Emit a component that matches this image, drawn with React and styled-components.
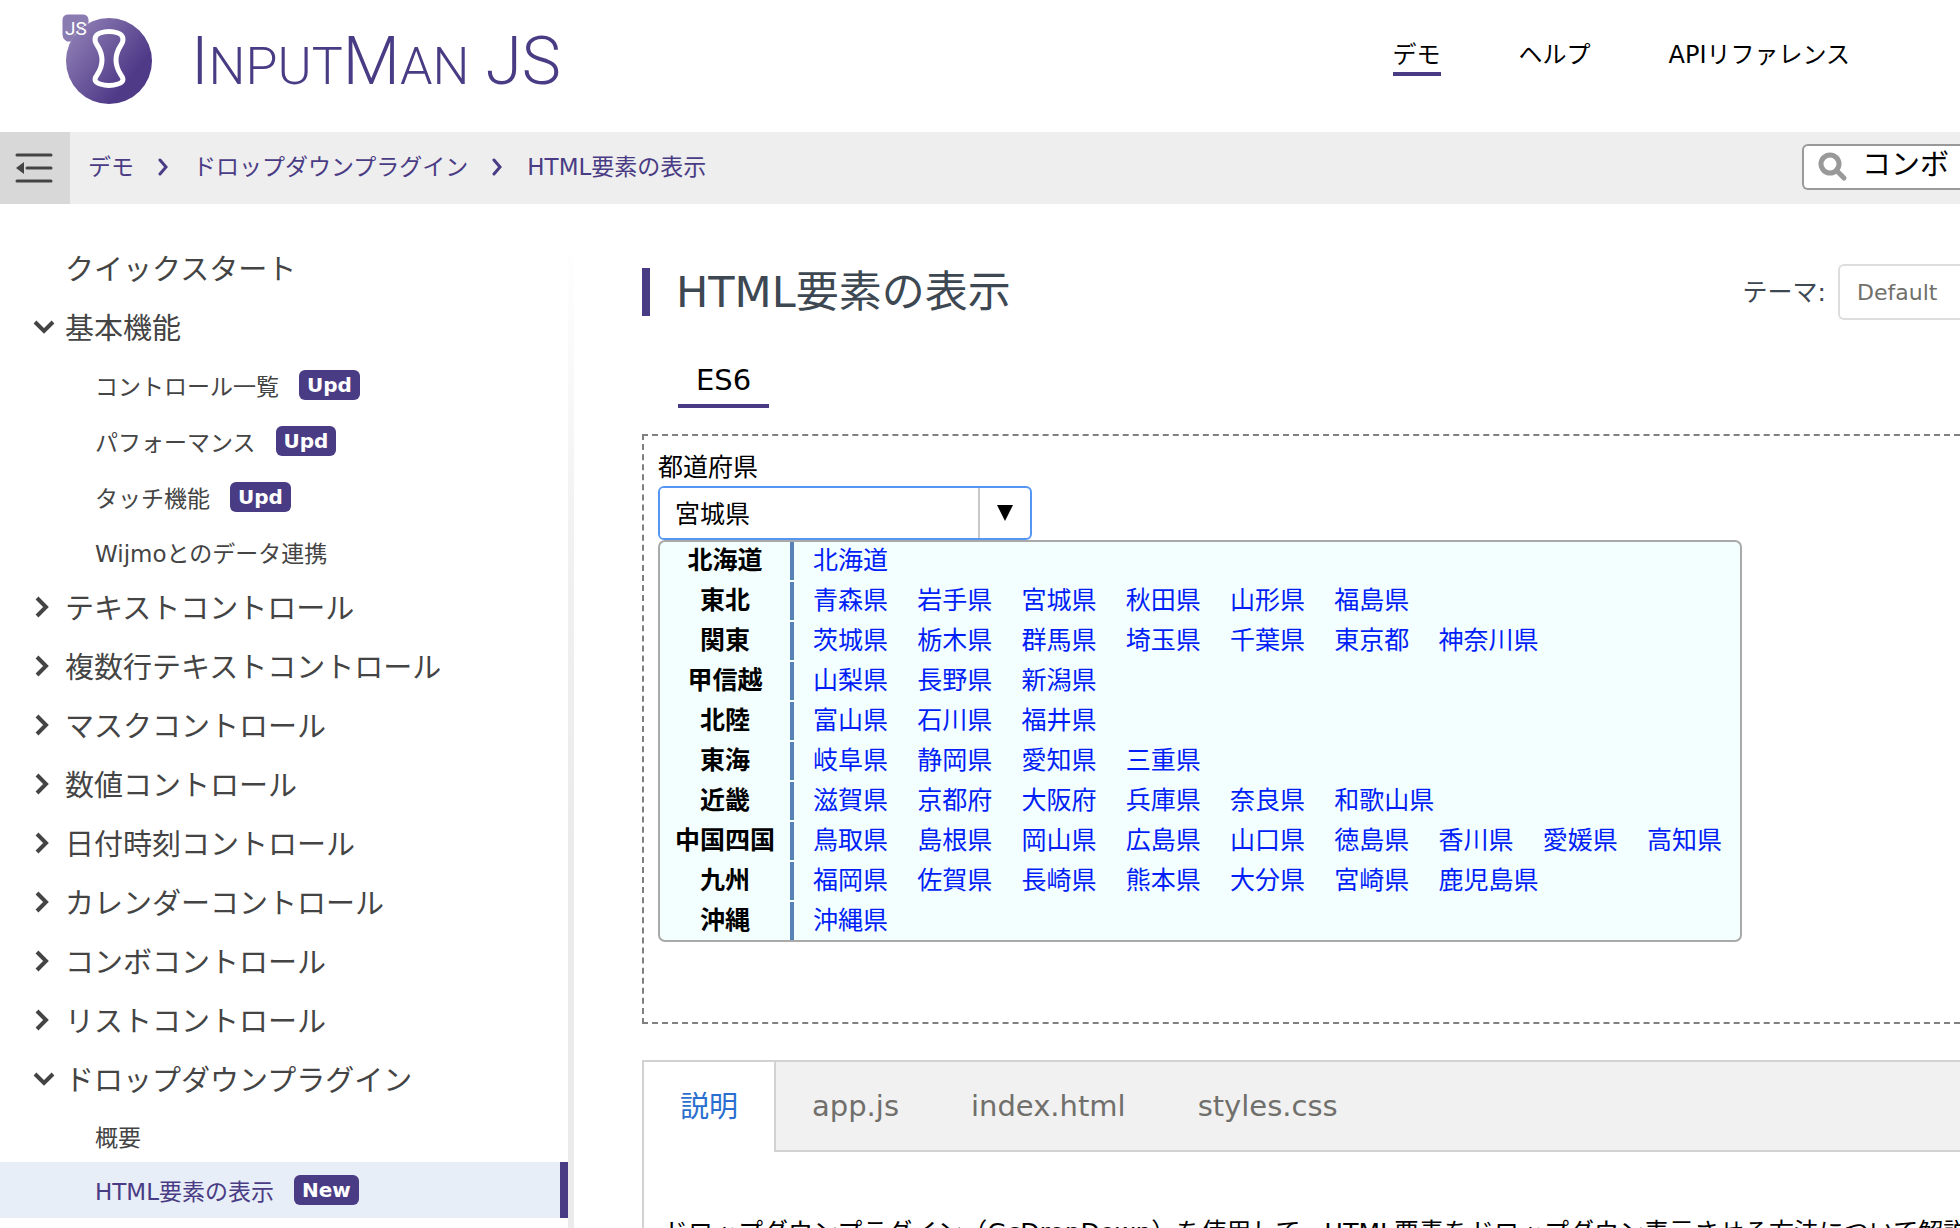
import React from 'react';
import styled, { createGlobalStyle, css } from 'styled-components';

const purple = '#4a3c84';

const GlobalStyle = createGlobalStyle`
  * {
    box-sizing: border-box;
  }

  body {
    margin: 0;
    background: #fff;
    color: #000;
    font-family: 'DejaVu Sans', 'Noto Sans CJK JP', sans-serif;
    font-size: 25px;
  }

  a {
    color: inherit;
    text-decoration: none;
  }

  button, input, select {
    font-family: inherit;
    color: inherit;
    margin: 0;
  }
`;

const Page = styled.div`
  display: flex;
  flex-direction: column;
  min-height: 100vh;
  overflow: hidden;
`;

const Header = styled.header`
  display: flex;
  justify-content: space-between;
  height: 132px;
  padding: 0 110px 0 60px;
`;

const Brand = styled.a`
  display: flex;
  gap: 38px;
  padding-top: 12px;
  color: ${purple};
`;

const Wordmark = styled.span`
  font-family: Roboto, sans-serif;
  font-weight: 300;
  font-size: 52px;
  line-height: 100px;
  white-space: nowrap;
`;

const BigLetter = styled.span`
  font-size: 66px;
`;

const TopNav = styled.nav`
  display: flex;
  align-items: flex-start;
  gap: 78px;
  padding-top: 38px;
`;

const TopLink = styled.a`
  font-size: 24px;
  line-height: 34px;
  white-space: nowrap;
  border-bottom: 4px solid ${({ $active }) => ($active ? purple : 'transparent')};
`;

const Bar = styled.div`
  display: flex;
  align-items: center;
  justify-content: space-between;
  height: 72px;
  background: #eee;
`;

const BarLeft = styled.div`
  display: flex;
  align-items: center;
  height: 100%;
`;

const MenuToggle = styled.button`
  display: flex;
  align-items: center;
  justify-content: center;
  width: 70px;
  height: 100%;
  padding: 0 2px 2px 0;
  border: 0;
  background: #d8d8d8;
`;

const Breadcrumb = styled.nav`
  display: flex;
  align-items: center;
  gap: 24px;
  padding: 0 0 2px 18px;
  color: ${purple};
  font-size: 23px;
  line-height: 34px;
  white-space: nowrap;
`;

const Search = styled.label`
  display: flex;
  align-items: center;
  gap: 14px;
  width: 158px;
  height: 46px;
  margin-bottom: 2px;
  padding-left: 14px;
  border: 2px solid #999;
  border-right: 0;
  border-radius: 6px 0 0 6px;
  background: #fff;
`;

const SearchInput = styled.input`
  flex: 1;
  min-width: 0;
  padding: 0 0 4px;
  border: 0;
  outline: 0;
  background: transparent;
  color: #000;
  font-size: 29px;
  line-height: 36px;
`;

const Body = styled.div`
  display: flex;
  flex: 1;
`;

const Sidebar = styled.nav`
  display: flex;
  flex: none;
  width: 574px;
  padding-top: 35px;
  color: #444;
`;

const Menu = styled.ul`
  flex: 1;
  margin: 0;
  padding: 0;
  list-style: none;
`;

const SidebarEdge = styled.div`
  width: 6px;
  background: linear-gradient(to bottom, #fff, #f1f1f1 300px, #ebebeb 600px);
`;

const MenuLink = styled.a`
  display: flex;
  align-items: center;
  height: 59px;
  padding: 0 0 4px 33px;
  font-size: 29px;
  white-space: nowrap;
`;

const MenuIcon = styled.span`
  display: flex;
  width: 32px;
  padding: 3px 0 0 ${({ $open }) => ($open ? 0 : 2)}px;
`;

const SubMenu = styled.ul`
  margin: 0;
  padding: 0;
  list-style: none;
`;

const SubLink = styled.a`
  display: flex;
  align-items: center;
  gap: 20px;
  height: ${({ $tall }) => ($tall ? 56 : 53)}px;
  padding-left: 95px;
  font-size: 23px;
  white-space: nowrap;

  ${({ $active }) => $active && css`
    background: #e8eef7;
    color: ${purple};
    border-right: 8px solid ${purple};
  `}
`;

const Badge = styled.span`
  padding: 0 8px;
  border-radius: 6px;
  background: ${purple};
  color: #fff;
  font-size: 20px;
  font-weight: bold;
  line-height: 30px;
`;

const Main = styled.main`
  flex: 1;
  min-width: 0;
  padding: 60px 0 0 68px;
`;

const TitleRow = styled.div`
  display: flex;
  align-items: center;
  justify-content: space-between;
  color: #3d4852;
`;

const Title = styled.h1`
  margin: 0;
  padding-left: 26px;
  border-left: 8px solid ${purple};
  font-size: 43px;
  font-weight: normal;
  line-height: 48px;
`;

const Theme = styled.div`
  display: flex;
  align-items: center;
  gap: 12px;
`;

const ThemeLabel = styled.label`
  padding-bottom: 4px;
`;

const ThemeSelect = styled.select`
  width: 122px;
  height: 56px;
  padding: 0 0 0 17px;
  border: 2px solid #ddd;
  border-right: 0;
  border-radius: 6px 0 0 6px;
  appearance: none;
  background: #fff;
  color: #706f6b;
  font-size: 22px;
`;

const ModuleTab = styled.button`
  display: block;
  margin: 36px 0 26px 36px;
  padding: 0 18px;
  border: 0;
  border-bottom: 4px solid ${purple};
  background: none;
  color: #000;
  font-size: 29px;
  line-height: 48px;
`;

const Demo = styled.section`
  padding: 14px 0 80px 14px;
  border: 2px dashed #808080;
  border-right: 0;
`;

const FieldLabel = styled.label`
  display: block;
  line-height: 36px;
`;

const Combo = styled.div`
  display: flex;
  width: 374px;
  height: 54px;
  border: 2px solid #5596f0;
  border-radius: 6px;
  background: #fff;
  overflow: hidden;
`;

const ComboInput = styled.input`
  flex: 1;
  min-width: 0;
  padding: 0 0 2px 15px;
  border: 0;
  outline: 0;
  font-size: 25px;
`;

const ComboButton = styled.button`
  display: flex;
  align-items: center;
  justify-content: center;
  width: 52px;
  padding: 0 0 1px;
  border: 0;
  border-left: 2px solid #c8c8c8;
  background: none;
`;

const DropDown = styled.div`
  width: fit-content;
  border: 2px solid #a9a9a9;
  border-radius: 7px;
  background: #f3ffff;
  overflow: hidden;
`;

const AreaTable = styled.table`
  margin: -2px 0;
  border-spacing: 0 2px;
  white-space: nowrap;
`;

const AreaName = styled.th`
  height: 38px;
  padding: 0 15px;
  border-right: 4px solid #5682b4;
  font-size: 25px;
  line-height: 38px;
`;

const Prefectures = styled.td`
  height: 38px;
  padding: 0 8px 0 9px;
  font-size: 29px;
  line-height: 38px;
`;

const Prefecture = styled.a`
  display: inline-block;
  padding: 0 10px;
  color: #001ef5;
  font-size: 25px;
  line-height: 38px;
  vertical-align: top;
`;

const Source = styled.section`
  margin-top: 36px;
  border-top: 2px solid #d2d2d2;
  border-left: 2px solid #d2d2d2;
`;

const TabList = styled.div`
  display: flex;

  &::after {
    content: '';
    flex: 1;
    border-bottom: 2px solid #d2d2d2;
    background: #f1f1f1;
  }
`;

const Tab = styled.button`
  height: 90px;
  padding: 0 36px;
  border: 0;
  border-bottom: 2px solid #d2d2d2;
  background: #f1f1f1;
  color: #706f6b;
  font-size: 29px;

  ${({ $active }) => $active && css`
    padding-bottom: 6px;
    border-bottom: 0;
    border-right: 2px solid #d2d2d2;
    background: #fff;
    color: #2a6fd0;
  `}
`;

const Description = styled.p`
  margin: 0;
  padding: 61px 0 20px 19px;
  line-height: 40px;
  white-space: nowrap;
`;

const LogoMark = () => (
  <svg width="93" height="94" viewBox="0 0 93 94" aria-hidden="true">
    <defs>
      <linearGradient id="disc" x1="0" y1="0.1" x2="0.75" y2="0.7">
        <stop offset="0" stopColor="#9384b8" />
        <stop offset="1" stopColor="#4f3a88" />
      </linearGradient>
    </defs>
    <circle cx="49" cy="49" r="43" fill="url(#disc)" />
    <path d="M8 3H23Q28 3 28 8V11Q16 17 11 29H7Q3 27 3 23V8Q3 3 8 3Z" fill="#8a7bb0" stroke="#8a7bb0" />
    <text x="5" y="23" fill="#fff" fontFamily="Roboto, sans-serif" fontSize="19">JS</text>
    <path
      d="M40 21Q49 18 58 21C64 23 64 29 61 33C57 39 56 42 56 48S57 57 61 63C64 67 64 70 58 72Q49 75 40 72C34 70 34 67 37 63C41 57 42 54 42 48S41 39 37 33C34 29 34 23 40 21Z"
      fill="none"
      stroke="#fff"
      strokeWidth="5"
    />
  </svg>
);

const ToggleIcon = () => (
  <svg width="38" height="32" viewBox="0 0 38 32" aria-hidden="true">
    <path d="M2 4H36M12 17H36M2 30H36" stroke="#444" strokeWidth="3" strokeLinecap="round" />
    <path d="M1 17L9 11V23Z" fill="#444" />
  </svg>
);

const SearchIcon = () => (
  <svg width="30" height="30" viewBox="0 0 30 30" aria-hidden="true">
    <circle cx="12" cy="12" r="9" fill="none" stroke="#999" strokeWidth="5" />
    <path d="M19 19L26 26" stroke="#999" strokeWidth="5" strokeLinecap="round" />
  </svg>
);

const CrumbArrow = () => (
  <svg width="11" height="18" viewBox="0 0 11 18" aria-hidden="true">
    <path d="M2 2L8 9L2 16" fill="none" stroke={purple} strokeWidth="3" strokeLinecap="round" />
  </svg>
);

const Chevron = ({ open }) =>
  open ? (
    <svg width="22" height="14" viewBox="0 0 22 14" aria-hidden="true">
      <path d="M2 2L11 11L20 2" fill="none" stroke="#444" strokeWidth="4" />
    </svg>
  ) : (
    <svg width="14" height="22" viewBox="0 0 14 22" aria-hidden="true">
      <path d="M2 2L11 11L2 20" fill="none" stroke="#444" strokeWidth="4" />
    </svg>
  );

const menu = [
  { name: 'クイックスタート', leaf: true },
  {
    name: '基本機能',
    children: [
      { name: 'コントロール一覧', badge: 'Upd' },
      { name: 'パフォーマンス', badge: 'Upd' },
      { name: 'タッチ機能', badge: 'Upd' },
      { name: 'Wijmoとのデータ連携' }
    ]
  },
  { name: 'テキストコントロール' },
  { name: '複数行テキストコントロール' },
  { name: 'マスクコントロール' },
  { name: '数値コントロール' },
  { name: '日付時刻コントロール' },
  { name: 'カレンダーコントロール' },
  { name: 'コンボコントロール' },
  { name: 'リストコントロール' },
  {
    name: 'ドロップダウンプラグイン',
    children: [
      { name: '概要' },
      { name: 'HTML要素の表示', badge: 'New', active: true }
    ]
  }
];

const areas = [
  { name: '北海道', items: ['北海道'] },
  { name: '東北', items: ['青森県', '岩手県', '宮城県', '秋田県', '山形県', '福島県'] },
  { name: '関東', items: ['茨城県', '栃木県', '群馬県', '埼玉県', '千葉県', '東京都', '神奈川県'] },
  { name: '甲信越', items: ['山梨県', '長野県', '新潟県'] },
  { name: '北陸', items: ['富山県', '石川県', '福井県'] },
  { name: '東海', items: ['岐阜県', '静岡県', '愛知県', '三重県'] },
  { name: '近畿', items: ['滋賀県', '京都府', '大阪府', '兵庫県', '奈良県', '和歌山県'] },
  { name: '中国四国', items: ['鳥取県', '島根県', '岡山県', '広島県', '山口県', '徳島県', '香川県', '愛媛県', '高知県'] },
  { name: '九州', items: ['福岡県', '佐賀県', '長崎県', '熊本県', '大分県', '宮崎県', '鹿児島県'] },
  { name: '沖縄', items: ['沖縄県'] }
];

const SideMenu = () => (
  <Sidebar>
    <Menu>
      {menu.map((group) => (
        <li key={group.name}>
          <MenuLink href="#">
            <MenuIcon $open={Boolean(group.children)}>
              {!group.leaf && <Chevron open={Boolean(group.children)} />}
            </MenuIcon>
            {group.name}
          </MenuLink>
          {group.children && (
            <SubMenu>
              {group.children.map((item) => (
                <li key={item.name}>
                  <SubLink href="#" $tall={Boolean(item.badge)} $active={item.active}>
                    {item.name}
                    {item.badge && <Badge>{item.badge}</Badge>}
                  </SubLink>
                </li>
              ))}
            </SubMenu>
          )}
        </li>
      ))}
    </Menu>
    <SidebarEdge />
  </Sidebar>
);

const AreaPicker = () => (
  <DropDown>
    <AreaTable>
      <tbody>
        {areas.map((area) => (
          <tr key={area.name}>
            <AreaName scope="row">{area.name}</AreaName>
            <Prefectures>
              {area.items.map((item) => (
                <React.Fragment key={item}>
                  <Prefecture href="#">{item}</Prefecture>{' '}
                </React.Fragment>
              ))}
            </Prefectures>
          </tr>
        ))}
      </tbody>
    </AreaTable>
  </DropDown>
);

const App = () => (
  <>
    <GlobalStyle />
    <Page>
      <Header>
        <Brand href="#">
          <LogoMark />
          <Wordmark>
            <BigLetter>I</BigLetter>NPUT<BigLetter>M</BigLetter>AN<BigLetter> JS</BigLetter>
          </Wordmark>
        </Brand>
        <TopNav>
          <TopLink href="#" $active>デモ</TopLink>
          <TopLink href="#">ヘルプ</TopLink>
          <TopLink href="#">APIリファレンス</TopLink>
        </TopNav>
      </Header>
      <Bar>
        <BarLeft>
          <MenuToggle aria-label="メニュー">
            <ToggleIcon />
          </MenuToggle>
          <Breadcrumb>
            <a href="#">デモ</a>
            <CrumbArrow />
            <a href="#">ドロップダウンプラグイン</a>
            <CrumbArrow />
            <a href="#">HTML要素の表示</a>
          </Breadcrumb>
        </BarLeft>
        <Search>
          <SearchIcon />
          <SearchInput type="text" aria-label="検索" defaultValue="コンボ" />
        </Search>
      </Bar>
      <Body>
        <SideMenu />
        <Main>
          <TitleRow>
            <Title>HTML要素の表示</Title>
            <Theme>
              <ThemeLabel htmlFor="theme">テーマ:</ThemeLabel>
              <ThemeSelect id="theme" defaultValue="Default">
                <option>Default</option>
              </ThemeSelect>
            </Theme>
          </TitleRow>
          <ModuleTab>ES6</ModuleTab>
          <Demo>
            <FieldLabel htmlFor="prefecture">都道府県</FieldLabel>
            <Combo>
              <ComboInput id="prefecture" type="text" defaultValue="宮城県" />
              <ComboButton aria-label="開く">
                <svg width="16" height="16" viewBox="0 0 16 16" aria-hidden="true">
                  <path d="M0 0H16L8 16Z" />
                </svg>
              </ComboButton>
            </Combo>
            <AreaPicker />
          </Demo>
          <Source>
            <TabList role="tablist">
              <Tab role="tab" aria-selected="true" $active>説明</Tab>
              <Tab role="tab">app.js</Tab>
              <Tab role="tab">index.html</Tab>
              <Tab role="tab">styles.css</Tab>
            </TabList>
            <Description>
              ドロップダウンプラグイン（GcDropDown）を使用して、HTML要素をドロップダウン表示させる方法について解説します。
            </Description>
          </Source>
        </Main>
      </Body>
    </Page>
  </>
);

export default App;
